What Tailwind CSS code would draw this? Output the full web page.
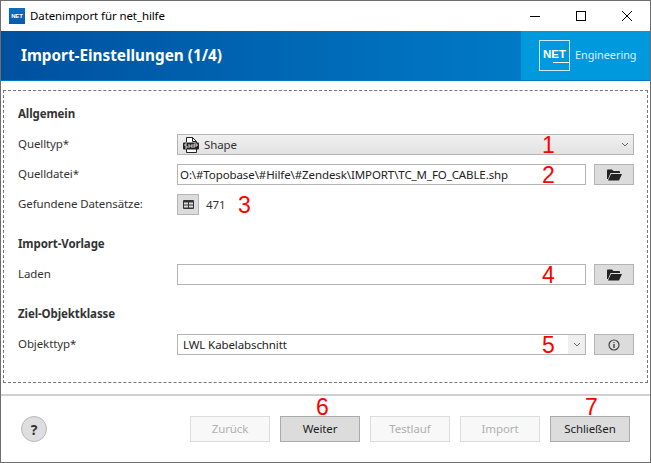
<!DOCTYPE html>
<html lang="de">
<head>
<meta charset="utf-8">
<title>Datenimport für net_hilfe</title>
<script src="https://cdn.jsdelivr.net/npm/@tailwindcss/browser@4"></script>
</head>
<body class="bg-white">
<div class="relative w-[651px] h-[463px] flex flex-col bg-white border-x border-b border-[#6e6e6e] font-['Noto_Sans',sans-serif] text-[11.5px] tracking-[-0.1px] text-[#333] overflow-hidden">

  <!-- Title bar -->
  <div class="h-[31px] flex items-center shrink-0 border-t border-[#6e6e6e]">
    <div class="ml-[8px] w-4 h-4 bg-gradient-to-b from-[#0a6fc0] to-[#0a5aa8] text-white text-[6px] font-bold leading-4 text-center font-['Liberation_Sans',sans-serif]">NET</div>
    <span class="ml-[5px] text-[11.5px] text-black">Datenimport für net_hilfe</span>
    <div class="ml-auto flex items-center">
      <div class="w-[46px] h-[30px] flex items-center justify-center">
        <svg width="10" height="10" viewBox="0 0 10 10"><path d="M0 5.5H10" stroke="#000" stroke-width="1"/></svg>
      </div>
      <div class="w-[46px] h-[30px] flex items-center justify-center">
        <svg width="10" height="10" viewBox="0 0 10 10"><rect x=".5" y=".5" width="9" height="9" fill="none" stroke="#000"/></svg>
      </div>
      <div class="w-[46px] h-[30px] flex items-center justify-center">
        <svg width="10" height="10" viewBox="0 0 10 10"><path d="M0 0L10 10M10 0L0 10" stroke="#000" stroke-width="1"/></svg>
      </div>
    </div>
  </div>

  <!-- Header -->
  <div class="h-[50px] shrink-0 flex bg-gradient-to-r from-[#00509f] to-[#0085d0] border-b border-[#0078c0]">
    <h1 class="ml-[20px] self-center text-[15.3px] tracking-normal font-bold text-white">Import-Einstellungen (1/4)</h1>
    <div class="ml-auto w-[129px] bg-[#0099dd] flex items-center">
      <div class="relative ml-[18px] w-[31px] h-[31px] border border-white/80 flex items-center justify-center">
        <span class="text-white text-[11.5px] tracking-normal font-bold leading-none font-['Liberation_Sans',sans-serif] -mt-[2px]">NET</span>
        <div class="absolute left-[13px] right-0 bottom-[7px] h-px bg-white"></div>
      </div>
      <span class="ml-[5px] text-[10.8px] tracking-normal text-white/85">Engineering</span>
    </div>
  </div>

  <!-- Form panel -->
  <div class="mt-[9px] mx-[2px] h-[293px] shrink-0 border border-dashed border-[#777] pl-[14px] pr-[13px] pt-[14px]">
    <h2 class="h-[18px] leading-[18px] font-bold">Allgemein</h2>

    <div class="mt-[11px] grid grid-cols-[151px_1fr_40px] gap-x-[8px] gap-y-[9px] items-center">
      <label class="col-start-1 -mt-[2px]">Quelltyp*</label>
      <div class="col-span-2 h-[21px] bg-gradient-to-b from-[#f0f0f0] to-[#e2e2e2] border border-[#b4b4b4] flex items-center pl-[5px] pr-[4px]">
        <svg width="16" height="18" viewBox="0 0 16 18">
          <path d="M3.5 6V1.5H9.5L13.5 5.5V16.5H3.5V13" fill="#fff" stroke="#222"/>
          <path d="M9.5 1.5V5.5H13.5" fill="none" stroke="#222"/>
          <rect x="0" y="6.5" width="16" height="7" rx="1" fill="#222"/>
          <path d="M4 8H2V10H4V12H2M6 8V12M9 8V12M6 10H9M11 12V8H14V10H11" stroke="#fff" stroke-width=".8" fill="none"/>
        </svg>
        <span class="ml-[5px]">Shape</span>
        <svg class="ml-auto" width="8" height="5" viewBox="0 0 8 5"><path d="M1 1L4 4L7 1" fill="none" stroke="#666"/></svg>
      </div>

      <label class="-mt-[2px]">Quelldatei*</label>
      <div class="h-[21px] border border-[#b4b4b4] flex items-center pl-[2px] text-[#222] whitespace-nowrap">O:\#Topobase\#Hilfe\#Zendesk\IMPORT\TC_M_FO_CABLE.shp</div>
      <div class="h-[21px] bg-[#dcdcdc] border border-[#b4b4b4] flex items-center justify-center">
        <svg width="15" height="12" viewBox="0 0 15 12"><path d="M0 1.5C0 1 .5.5 1 .5H5L6.5 2H12C12.5 2 13 2.5 13 3V4H3.5L1 10H0Z" fill="#222"/><path d="M4 5H15L12 11.5H1Z" fill="#222"/></svg>
      </div>

      <label class="-mt-[2px]">Gefundene Datensätze:</label>
      <div class="col-span-2 flex items-center">
        <div class="w-[22px] h-[21px] bg-[#dcdcdc] border border-[#b4b4b4] flex items-center justify-center">
          <svg width="11" height="9" viewBox="0 0 11 9"><rect width="11" height="9" rx="1" fill="#333"/><path d="M1 3.5H5M6 3.5H10M1 6.5H5M6 6.5H10" stroke="#dcdcdc" stroke-width="2"/></svg>
        </div>
        <span class="ml-[7px]">471</span>
      </div>
    </div>

    <h2 class="mt-[20px] h-[18px] leading-[18px] font-bold">Import-Vorlage</h2>

    <div class="mt-[11px] grid grid-cols-[151px_1fr_40px] gap-x-[8px] items-center">
      <label class="-mt-[2px]">Laden</label>
      <div class="h-[21px] border border-[#b4b4b4]"></div>
      <div class="h-[21px] bg-[#dcdcdc] border border-[#b4b4b4] flex items-center justify-center">
        <svg width="15" height="12" viewBox="0 0 15 12"><path d="M0 1.5C0 1 .5.5 1 .5H5L6.5 2H12C12.5 2 13 2.5 13 3V4H3.5L1 10H0Z" fill="#222"/><path d="M4 5H15L12 11.5H1Z" fill="#222"/></svg>
      </div>
    </div>

    <h2 class="mt-[20px] h-[18px] leading-[18px] font-bold">Ziel-Objektklasse</h2>

    <div class="mt-[11px] grid grid-cols-[151px_1fr_40px] gap-x-[8px] items-center">
      <label class="-mt-[2px]">Objekttyp*</label>
      <div class="h-[21px] border border-[#b4b4b4] flex items-center pl-[5px] text-[#222]">
        <span>LWL Kabelabschnitt</span>
        <div class="ml-auto w-[17px] h-full bg-[#efefef] flex items-center justify-center">
          <svg width="8" height="5" viewBox="0 0 8 5"><path d="M1 1L4 4L7 1" fill="none" stroke="#666"/></svg>
        </div>
      </div>
      <div class="h-[21px] bg-[#dcdcdc] border border-[#b4b4b4] flex items-center justify-center">
        <svg width="12" height="12" viewBox="0 0 12 12"><circle cx="6" cy="6" r="5" fill="none" stroke="#444" stroke-width="1.2"/><path d="M6 5V9" stroke="#444" stroke-width="1.4"/><path d="M6 3V4" stroke="#444" stroke-width="1.2"/></svg>
      </div>
    </div>
  </div>

  <!-- Footer -->
  <div class="mt-[11px] flex-1 border-t-2 border-[#d0d0d0] flex items-start pt-[20px] pl-[20px]">
    <div class="w-[26px] h-[26px] rounded-full bg-[#dedede] border border-[#b8b8b8] flex items-center justify-center text-[14px] font-bold text-[#333]">?</div>
    <div class="ml-[143px] flex gap-[10px]">
      <button class="w-[80px] h-[26px] bg-[#f8f8f8] border border-[#dcdcdc] text-[#b0b0b0]">Zurück</button>
      <button class="w-[80px] h-[26px] bg-[#dcdcdc] border border-[#aaa] text-[#222]">Weiter</button>
      <button class="w-[80px] h-[26px] bg-[#f8f8f8] border border-[#dcdcdc] text-[#b0b0b0]">Testlauf</button>
      <button class="w-[80px] h-[26px] bg-[#f8f8f8] border border-[#dcdcdc] text-[#b0b0b0]">Import</button>
      <button class="w-[80px] h-[26px] bg-[#dcdcdc] border border-[#aaa] text-[#222]">Schließen</button>
    </div>
  </div>

  <!-- Red annotations over the dialog -->
  <span class="absolute left-[541px] top-[132px] text-[23px] leading-[26px] tracking-normal text-[#f00] font-['Liberation_Sans',sans-serif]">1</span>
  <span class="absolute left-[541px] top-[162px] text-[23px] leading-[26px] tracking-normal text-[#f00] font-['Liberation_Sans',sans-serif]">2</span>
  <span class="absolute left-[237px] top-[192px] text-[23px] leading-[26px] tracking-normal text-[#f00] font-['Liberation_Sans',sans-serif]">3</span>
  <span class="absolute left-[541px] top-[262px] text-[23px] leading-[26px] tracking-normal text-[#f00] font-['Liberation_Sans',sans-serif]">4</span>
  <span class="absolute left-[541px] top-[332px] text-[23px] leading-[26px] tracking-normal text-[#f00] font-['Liberation_Sans',sans-serif]">5</span>
  <span class="absolute left-[315px] top-[394px] text-[23px] leading-[26px] tracking-normal text-[#f00] font-['Liberation_Sans',sans-serif]">6</span>
  <span class="absolute left-[584px] top-[394px] text-[23px] leading-[26px] tracking-normal text-[#f00] font-['Liberation_Sans',sans-serif]">7</span>
</div>
</body>
</html>
